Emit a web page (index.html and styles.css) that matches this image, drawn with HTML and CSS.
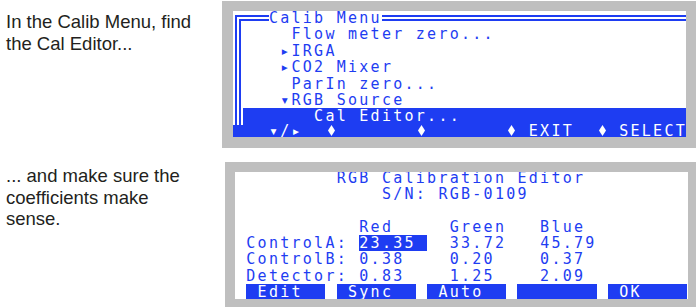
FILE: index.html
```html
<!DOCTYPE html>
<html lang="en">
<head>
  <meta charset="UTF-8" />
  <title>Calibration Editor</title>
  <link rel="stylesheet" href="styles.css">
</head>
<body>
  <div class="page">

    <section class="step">
      <p class="caption">In the Calib Menu, find the Cal Editor...</p>
      <div class="frame frame-menu">
        <div class="screen">
          <fieldset class="menu">
            <legend>Calib Menu</legend>
            <div class="row">    Flow meter zero...</div>
            <div class="row">   ▸IRGA</div>
            <div class="row">   ▸CO2 Mixer</div>
            <div class="row">    ParIn zero...</div>
            <div class="row">   ▾RGB Source</div>
            <div class="row sel">      Cal Editor...</div>
          </fieldset>
          <div class="row keys">   ▾/▸  <span class="dia"><svg width="7" height="11" viewBox="0 0 7 11"><polygon points="3.5,0 7,5.5 3.5,11 0,5.5" /></svg></span>       <span class="dia"><svg width="7" height="11" viewBox="0 0 7 11"><polygon points="3.5,0 7,5.5 3.5,11 0,5.5" /></svg></span>       <span class="dia"><svg width="7" height="11" viewBox="0 0 7 11"><polygon points="3.5,0 7,5.5 3.5,11 0,5.5" /></svg></span> EXIT  <span class="dia"><svg width="7" height="11" viewBox="0 0 7 11"><polygon points="3.5,0 7,5.5 3.5,11 0,5.5" /></svg></span> SELECT</div>
        </div>
      </div>
    </section>

    <section class="step">
      <p class="caption caption-wide">... and make sure the coefficients make sense.</p>
      <div class="frame frame-editor">
        <div class="screen">
          <div class="lines">
            <div class="row">         RGB Calibration Editor</div>
            <div class="row">             S/N: RGB-0109</div>
            <div class="row"> </div>
            <div class="row">           Red     Green   Blue</div>
            <div class="row"> ControlA: <span class="hl">23.35 </span>  33.72   45.79</div>
            <div class="row"> ControlB: 0.38    0.20    0.37</div>
            <div class="row"> Detector: 0.83    1.25    2.09</div>
            <div class="softkeys">
              <span>Edit</span>
              <span>Sync</span>
              <span>Auto</span>
              <span></span>
              <span>OK</span>
            </div>
          </div>
        </div>
      </div>
    </section>

  </div>
</body>
</html>
```

FILE: styles.css
```css
:root {
  --lcd: #1e3df2;
  --bezel: #bfbfbf;
  --ink: #231f20;
  --col: 11.3px;
  --line: 16.4px;
}

body {
  margin: 0;
  background: #ffffff;
  font-family: "Liberation Sans", Arial, sans-serif;
}

.page {
  display: flex;
  flex-direction: column;
  gap: 14px;
}

.step {
  display: flex;
  align-items: flex-start;
}

.caption {
  width: 222px;
  box-sizing: border-box;
  margin: 0;
  padding: 11px 18px 0 6px;
  font-size: 18.5px;
  line-height: 21.5px;
  color: var(--ink);
}

.caption-wide {
  width: 225px;
  padding-top: 3px;
  padding-right: 30px;
}

.frame {
  background: var(--bezel);
}

.frame-menu {
  margin-top: 1px;
  padding: 10px 10px 11px 11px;
}

.frame-menu .screen {
  height: 126px;
}

.frame-editor {
  padding: 10px 8px 10px 10px;
}

.frame-editor .screen {
  height: 127px;
}

/* the LCD: 40 columns of fixed-width text */
.screen {
  width: 453px;
  overflow: hidden;
  background: #ffffff;
  color: var(--lcd);
  font-family: "DejaVu Sans Mono", monospace;
  font-size: 15px;
  letter-spacing: 2.27px;
  line-height: var(--line);
}

.row {
  height: var(--line);
  white-space: pre;
}

.menu {
  margin: -1px 0 0 2px;
  padding: 0;
  min-width: 0;
  border: 6px double var(--lcd);
  border-right: 0;
  border-bottom: 0;
}

.menu legend {
  margin-left: 27.9px;
  padding: 0;
  line-height: var(--line);
  white-space: pre;
}

.menu .row {
  margin-left: 2px;
  padding-left: 3.3px;
}

.sel,
.keys {
  background: var(--lcd);
  color: #ffffff;
}

.keys {
  padding-left: 2px;
  line-height: 13px;
}

.dia {
  display: inline-block;
  width: var(--col);
  letter-spacing: 0;
  text-align: center;
}

.dia svg {
  fill: #ffffff;
  vertical-align: baseline;
}

.lines {
  margin-top: -2.5px;
}

.hl {
  display: inline-block;
  height: var(--line);
  vertical-align: top;
  background: var(--lcd);
  color: #ffffff;
}

.softkeys {
  display: flex;
  gap: var(--col);
  height: var(--line);
  padding-left: var(--col);
}

.softkeys span {
  width: 79.1px;
  box-sizing: border-box;
  padding-left: var(--col);
  background: var(--lcd);
  color: #ffffff;
  white-space: pre;
}
```
